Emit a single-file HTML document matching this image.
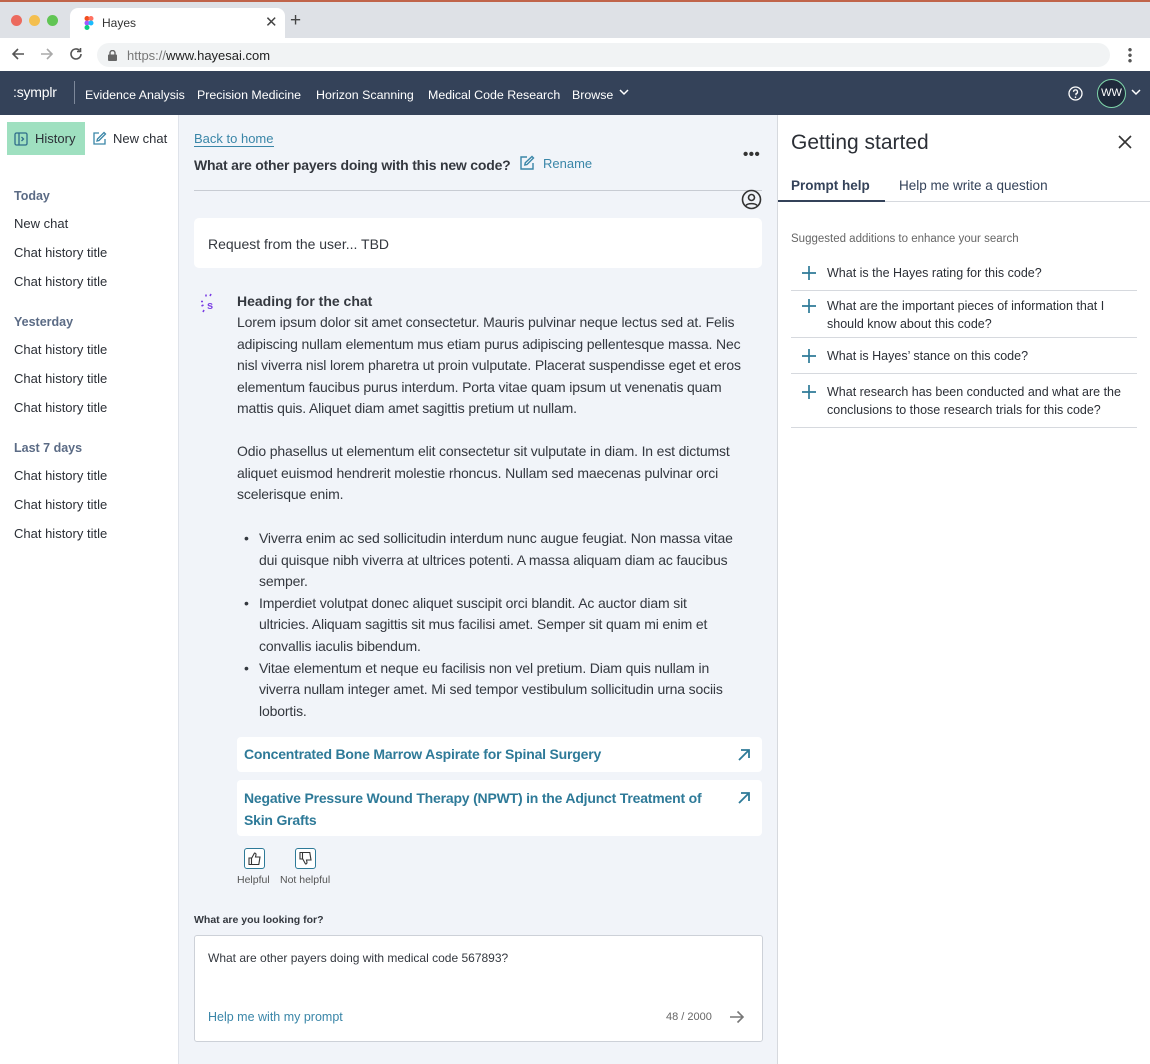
<!DOCTYPE html>
<html><head><meta charset="utf-8">
<style>
*{box-sizing:border-box;margin:0;padding:0}
body{width:1150px;height:1064px;overflow:hidden;font-family:"Liberation Sans",sans-serif;background:#fff;position:relative;color:#2b2f36}
.a{position:absolute;white-space:nowrap}
.nav a{color:#fff;font-size:12.4px}
.side{font-size:13px;color:#2b2f36}
.sh{font-size:12.5px;color:#5b6b85;font-weight:bold}
.p{font-size:14px;line-height:21.6px;color:#34383f;letter-spacing:-0.15px}
.sug{font-size:12.5px;line-height:18px;color:#2b2f36}
.line{position:absolute;left:791px;width:346px;height:1px;background:#d6d9de}
.plus{position:absolute;left:800px;width:18px;height:18px}
</style></head><body>
<div class="a" style="left:0;top:0;width:1150px;height:2px;background:#c0644a"></div>
<div class="a" style="left:0;top:2px;width:1150px;height:36px;background:#dee1e6"></div>
<div class="a" style="left:11px;top:15px;width:11px;height:11px;border-radius:6px;background:#ec6a5e"></div>
<div class="a" style="left:29px;top:15px;width:11px;height:11px;border-radius:6px;background:#f4bf4f"></div>
<div class="a" style="left:47px;top:15px;width:11px;height:11px;border-radius:6px;background:#61c554"></div>
<div class="a" style="left:70px;top:8px;width:215px;height:30px;background:#fff;border-radius:8px 8px 0 0"></div>
<svg class="a" style="left:84px;top:16px" width="10" height="14" viewBox="0 0 10 14"><circle cx="3" cy="2.5" r="2.5" fill="#f24e1e"/><circle cx="7" cy="2.5" r="2.5" fill="#ff7262"/><circle cx="3" cy="7" r="2.5" fill="#a259ff"/><circle cx="7" cy="7" r="2.5" fill="#1abcfe"/><circle cx="3" cy="11.5" r="2.5" fill="#0acf83"/></svg>
<div class="a" style="left:102px;top:16px;font-size:12px;color:#333">Hayes</div>
<div class="a" style="left:265px;top:13px;font-size:15px;color:#444">✕</div>
<div class="a" style="left:290px;top:10px;font-size:19px;color:#444">+</div>
<div class="a" style="left:0;top:38px;width:1150px;height:33px;background:#fff"></div>
<svg class="a" style="left:11px;top:47px" width="14" height="14" viewBox="0 0 14 14"><path d="M13 7H2M7 2L2 7l5 5" stroke="#555" stroke-width="1.6" fill="none"/></svg>
<svg class="a" style="left:40px;top:47px" width="14" height="14" viewBox="0 0 14 14"><path d="M1 7h11M7 2l5 5-5 5" stroke="#aaa" stroke-width="1.6" fill="none"/></svg>
<svg class="a" style="left:69px;top:47px" width="14" height="14" viewBox="0 0 14 14"><path d="M12 7a5 5 0 1 1-1.5-3.6" stroke="#555" stroke-width="1.6" fill="none"/><path d="M11.5 1v3.5H8" stroke="#555" stroke-width="1.6" fill="none"/></svg>
<div class="a" style="left:97px;top:43px;width:1013px;height:24px;border-radius:12px;background:#f1f3f4"></div>
<svg class="a" style="left:108px;top:50px" width="9" height="11" viewBox="0 0 9 11"><rect x="0" y="4.5" width="9" height="6.5" rx="1" fill="#666"/><path d="M2 5V3a2.5 2.5 0 0 1 5 0v2" stroke="#666" stroke-width="1.4" fill="none"/></svg>
<div class="a" style="left:127px;top:48px;font-size:13px;color:#777">https://<span style="color:#222">www.hayesai.com</span></div>
<div class="a" style="left:1128px;top:47px;width:4px;height:16px;background:radial-gradient(circle,#555 1.5px,transparent 2px) 0 0/4px 5.5px"></div>
<div class="a nav" style="left:0;top:71px;width:1150px;height:44px;background:#344259"></div>
<div class="a" style="left:13px;top:84px;color:#fff;font-size:14px;letter-spacing:-0.2px">:symplr</div>
<div class="a" style="left:74px;top:81px;width:1px;height:23px;background:#7d889a"></div>
<div class="a nav" style="left:85px;top:86px"><a>Evidence Analysis</a></div>
<div class="a nav" style="left:197px;top:86px"><a>Precision Medicine</a></div>
<div class="a nav" style="left:316px;top:86px"><a>Horizon Scanning</a></div>
<div class="a nav" style="left:428px;top:86px"><a>Medical Code Research</a></div>
<div class="a nav" style="left:572px;top:86px"><a>Browse</a></div>
<svg class="a" style="left:619px;top:89px" width="10" height="7" viewBox="0 0 10 7"><path d="M1 1l4 4 4-4" stroke="#fff" stroke-width="1.5" fill="none"/></svg>
<svg class="a" style="left:1068px;top:86px" width="15" height="15" viewBox="0 0 15 15"><circle cx="7.5" cy="7.5" r="6.5" stroke="#fff" stroke-width="1.3" fill="none"/><path d="M5.5 5.8a2 2 0 1 1 2.5 2v1.5" stroke="#fff" stroke-width="1.3" fill="none"/><circle cx="7.5" cy="11.2" r=".8" fill="#fff"/></svg>
<div class="a" style="left:1097px;top:79px;width:29px;height:29px;border-radius:15px;border:1.5px solid #7fd6aa;background:#1f2a3c;color:#fff;font-size:11px;text-align:center;line-height:26px">WW</div>
<svg class="a" style="left:1131px;top:89px" width="10" height="7" viewBox="0 0 10 7"><path d="M1 1l4 4 4-4" stroke="#fff" stroke-width="1.5" fill="none"/></svg>
<div class="a" style="left:178px;top:115px;width:1px;height:949px;background:#dfe3ea"></div>
<div class="a" style="left:7px;top:122px;width:78px;height:33px;background:#9fe0c0"></div>
<svg class="a" style="left:14px;top:132px" width="14" height="14" viewBox="0 0 14 14"><rect x="1" y="1" width="12" height="12" rx="1.5" stroke="#2f6d8a" stroke-width="1.3" fill="none"/><path d="M5 1v12M7.5 5l2 2-2 2" stroke="#2f6d8a" stroke-width="1.3" fill="none"/></svg>
<div class="a side" style="left:35px;top:131px">History</div>
<svg class="a" style="left:92px;top:131px" width="15" height="15" viewBox="0 0 15 15"><path d="M7 2H2v11h11V8" stroke="#3a86a8" stroke-width="1.3" fill="none"/><path d="M12 1.5l1.5 1.5L7 9.5 5 10l.5-2z" stroke="#3a86a8" stroke-width="1.3" fill="none"/></svg>
<div class="a side" style="left:113px;top:131px">New chat</div>
<div class="a sh" style="left:14px;top:189px">Today</div>
<div class="a side" style="left:14px;top:216px">New chat</div>
<div class="a side" style="left:14px;top:245px">Chat history title</div>
<div class="a side" style="left:14px;top:274px">Chat history title</div>
<div class="a sh" style="left:14px;top:315px">Yesterday</div>
<div class="a side" style="left:14px;top:342px">Chat history title</div>
<div class="a side" style="left:14px;top:371px">Chat history title</div>
<div class="a side" style="left:14px;top:400px">Chat history title</div>
<div class="a sh" style="left:14px;top:441px">Last 7 days</div>
<div class="a side" style="left:14px;top:468px">Chat history title</div>
<div class="a side" style="left:14px;top:497px">Chat history title</div>
<div class="a side" style="left:14px;top:526px">Chat history title</div>
<div class="a" style="left:179px;top:115px;width:598px;height:949px;background:#f1f4f9"></div>
<div class="a" style="left:194px;top:131px;font-size:13px;color:#3a86a8;border-bottom:1px solid #3a86a8;line-height:15px">Back to home</div>
<div class="a" style="left:194px;top:157px;font-size:14px;font-weight:bold;color:#34383f;letter-spacing:-0.2px">What are other payers doing with this new code?</div>
<svg class="a" style="left:519px;top:155px" width="16" height="16" viewBox="0 0 16 16"><path d="M8 2H2v12h12V8" stroke="#3a86a8" stroke-width="1.4" fill="none"/><path d="M13 1.5l1.5 1.5L8 9.5 5.8 10l.5-2.2z" stroke="#3a86a8" stroke-width="1.4" fill="none"/></svg>
<div class="a" style="left:543px;top:156px;font-size:13px;color:#3a86a8">Rename</div>
<div class="a" style="left:743px;top:146px;font-size:15px;font-weight:bold;color:#333;letter-spacing:0.5px">•••</div>
<div class="a" style="left:194px;top:190px;width:568px;height:1px;background:#c8ccd3"></div>
<svg class="a" style="left:741px;top:189px" width="21" height="21" viewBox="0 0 21 21"><circle cx="10.5" cy="10.5" r="9" stroke="#333" stroke-width="1.6" fill="none"/><circle cx="10.5" cy="8.5" r="3" stroke="#333" stroke-width="1.6" fill="none"/><path d="M5 16.5c1.5-2.5 9.5-2.5 11 0" stroke="#333" stroke-width="1.6" fill="none"/></svg>
<div class="a" style="left:194px;top:218px;width:568px;height:50px;background:#fff;border-radius:5px"></div>
<div class="a" style="left:208px;top:236px;font-size:14px;color:#34383f">Request from the user... TBD</div>
<svg class="a" style="left:199px;top:293px" width="18" height="22" viewBox="0 0 18 22"><g stroke="#7b3fe4" stroke-width="1.6"><path d="M7 1.5v2M11 3l1-2M2 8.5h2M2.5 13l2-1M5 17l-1 2"/></g><text x="8" y="16" font-size="11" font-weight="bold" fill="#7b3fe4" font-family="Liberation Sans">s</text></svg>
<div class="a" style="left:237px;top:293px;font-size:14px;font-weight:bold;color:#34383f">Heading for the chat</div>
<div class="a p" style="left:237px;top:312px">Lorem ipsum dolor sit amet consectetur. Mauris pulvinar neque lectus sed at. Felis<br>adipiscing nullam elementum mus etiam purus adipiscing pellentesque massa. Nec<br>nisl viverra nisl lorem pharetra ut proin vulputate. Placerat suspendisse eget et eros<br>elementum faucibus purus interdum. Porta vitae quam ipsum ut venenatis quam<br>mattis quis. Aliquet diam amet sagittis pretium ut nullam.</div>
<div class="a p" style="left:237px;top:441px">Odio phasellus ut elementum elit consectetur sit vulputate in diam. In est dictumst<br>aliquet euismod hendrerit molestie rhoncus. Nullam sed maecenas pulvinar orci<br>scelerisque enim.</div>
<div class="a p" style="left:244px;top:528px">•<br><br><br>•<br><br><br>•</div>
<div class="a p" style="left:259px;top:528px">Viverra enim ac sed sollicitudin interdum nunc augue feugiat. Non massa vitae<br>dui quisque nibh viverra at ultrices potenti. A massa aliquam diam ac faucibus<br>semper.<br>Imperdiet volutpat donec aliquet suscipit orci blandit. Ac auctor diam sit<br>ultricies. Aliquam sagittis sit mus facilisi amet. Semper sit quam mi enim et<br>convallis iaculis bibendum.<br>Vitae elementum et neque eu facilisis non vel pretium. Diam quis nullam in<br>viverra nullam integer amet. Mi sed tempor vestibulum sollicitudin urna sociis<br>lobortis.</div>
<div class="a" style="left:237px;top:737px;width:525px;height:35px;background:#fff;border-radius:4px"></div>
<div class="a" style="left:244px;top:746px;font-size:14px;font-weight:bold;color:#2e7a98;letter-spacing:-0.2px">Concentrated Bone Marrow Aspirate for Spinal Surgery</div>
<div class="a" style="left:237px;top:780px;width:525px;height:56px;background:#fff;border-radius:4px"></div>
<div class="a" style="left:244px;top:788px;font-size:14px;font-weight:bold;color:#2e7a98;line-height:21.5px;letter-spacing:-0.2px">Negative Pressure Wound Therapy (NPWT) in the Adjunct Treatment of<br>Skin Grafts</div>
<svg class="a" style="left:737px;top:748px" width="14" height="14" viewBox="0 0 14 14"><path d="M2 12L12 2M4 2h8v8" stroke="#2e7a98" stroke-width="1.8" fill="none"/></svg>
<svg class="a" style="left:737px;top:791px" width="14" height="14" viewBox="0 0 14 14"><path d="M2 12L12 2M4 2h8v8" stroke="#2e7a98" stroke-width="1.8" fill="none"/></svg>
<div class="a" style="left:244px;top:848px;width:21px;height:21px;border:1.3px solid #2e7a98;border-radius:3px;background:#fff"></div>
<svg class="a" style="left:247px;top:851px" width="15" height="15" viewBox="0 0 15 15"><path d="M2 7h2.5v6.5H2zM4.5 7.5l3-5.5c1.3 0 1.7 1 1.4 2.2L8.5 6H13l-1.2 7.5H4.5" stroke="#333" stroke-width="1.1" fill="none"/></svg>
<div class="a" style="left:295px;top:848px;width:21px;height:21px;border:1.3px solid #2e7a98;border-radius:3px;background:#fff"></div>
<svg class="a" style="left:298px;top:851px" width="15" height="15" viewBox="0 0 15 15"><path d="M2 1.5h2.5V8H2zM4.5 7.5l3 5.5c1.3 0 1.7-1 1.4-2.2L8.5 9H13l-1.2-7.5H4.5" stroke="#333" stroke-width="1.1" fill="none"/></svg>
<div class="a" style="left:237px;top:874px;font-size:10.5px;color:#555">Helpful</div>
<div class="a" style="left:280px;top:874px;font-size:10.5px;color:#555">Not helpful</div>
<div class="a" style="left:194px;top:914px;font-size:10.5px;font-weight:bold;color:#34383f">What are you looking for?</div>
<div class="a" style="left:194px;top:935px;width:569px;height:107px;background:#fff;border:1px solid #cdd1d8;border-radius:3px"></div>
<div class="a" style="left:208px;top:951px;font-size:12px;color:#34383f">What are other payers doing with medical code 567893?</div>
<div class="a" style="left:208px;top:1010px;font-size:12.5px;color:#3a86a8">Help me with my prompt</div>
<div class="a" style="left:666px;top:1011px;font-size:11px;color:#666">48 / 2000</div>
<svg class="a" style="left:729px;top:1009px" width="16" height="16" viewBox="0 0 16 16"><path d="M1 8h13M8.5 2.5L14 8l-5.5 5.5" stroke="#777" stroke-width="1.6" fill="none"/></svg>
<div class="a" style="left:777px;top:115px;width:1px;height:949px;background:#d6d9de"></div>
<div class="a" style="left:791px;top:131px;font-size:21px;color:#2b2f36">Getting started</div>
<svg class="a" style="left:1118px;top:135px" width="14" height="14" viewBox="0 0 14 14"><path d="M1 1l12 12M13 1L1 13" stroke="#333" stroke-width="1.6"/></svg>
<div class="a" style="left:791px;top:178px;font-size:13.5px;font-weight:bold;color:#344259">Prompt help</div>
<div class="a" style="left:899px;top:178px;font-size:13.5px;color:#344259">Help me write a question</div>
<div class="a" style="left:778px;top:201px;width:372px;height:1px;background:#d6d9de"></div>
<div class="a" style="left:778px;top:200px;width:107px;height:2px;background:#344259"></div>
<div class="a" style="left:791px;top:233px;font-size:11.5px;color:#666">Suggested additions to enhance your search</div>
<svg class="plus" style="top:264px" viewBox="0 0 18 18"><path d="M9 2v14M2 9h14" stroke="#2e7a98" stroke-width="1.7"/></svg>
<div class="a sug" style="left:827px;top:264px">What is the Hayes rating for this code?</div>
<div class="line" style="top:290px"></div>
<svg class="plus" style="top:297px" viewBox="0 0 18 18"><path d="M9 2v14M2 9h14" stroke="#2e7a98" stroke-width="1.7"/></svg>
<div class="a sug" style="left:827px;top:297px">What are the important pieces of information that I<br>should know about this code?</div>
<div class="line" style="top:337px"></div>
<svg class="plus" style="top:347px" viewBox="0 0 18 18"><path d="M9 2v14M2 9h14" stroke="#2e7a98" stroke-width="1.7"/></svg>
<div class="a sug" style="left:827px;top:347px">What is Hayes’ stance on this code?</div>
<div class="line" style="top:373px"></div>
<svg class="plus" style="top:383px" viewBox="0 0 18 18"><path d="M9 2v14M2 9h14" stroke="#2e7a98" stroke-width="1.7"/></svg>
<div class="a sug" style="left:827px;top:383px">What research has been conducted and what are the<br>conclusions to those research trials for this code?</div>
<div class="line" style="top:427px"></div>
</body></html>
